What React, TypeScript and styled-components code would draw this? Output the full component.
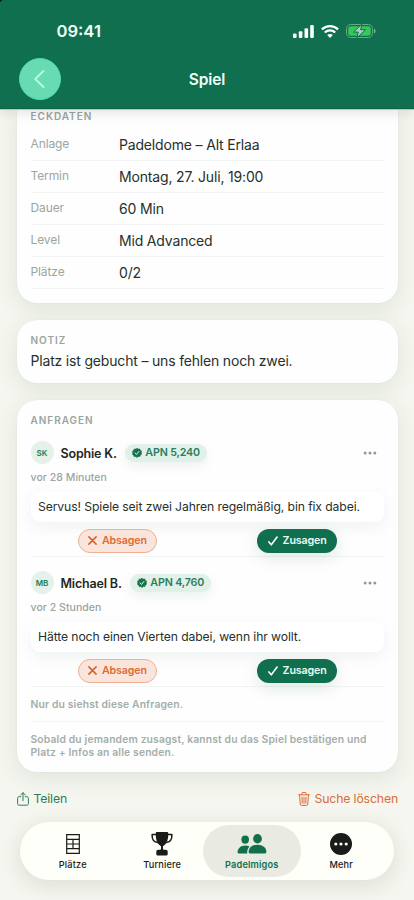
import React from "react";
import styled, { createGlobalStyle, css } from "styled-components";

const GlobalStyle = createGlobalStyle`
  * { box-sizing: border-box; }
  html, body { margin: 0; padding: 0; }
  body { font-family: Inter, "Liberation Sans", sans-serif; background: #f5f6ef; }
  svg { display: block; flex: none; }
  button { font: inherit; border: 0; background: none; padding: 0; margin: 0; color: inherit; }
`;

const Screen = styled.div`
  width: 414px;
  height: 900px;
  overflow: hidden;
  display: flex;
  flex-direction: column;
  background: #f5f6ef;
  color: #26302c;
`;

const Header = styled.header`
  position: relative;
  z-index: 2;
  flex: none;
  height: 109px;
  background: radial-gradient(circle at 0 0, #04150e 1px, #106f4e 2.5px);
  border-bottom: 1px solid #0b6444;
  box-shadow: 0 1px 0 #a9cfbd, 0 3px 12px rgba(0, 0, 0, 0.12);
  color: #f2fff9;
`;

const StatusBar = styled.div`
  height: 58px;
  padding: 4px 38px 0 56.5px;
  display: flex;
  align-items: center;
  justify-content: space-between;
`;

const Clock = styled.div`
  font-size: 16.6px;
  font-weight: 600;
  letter-spacing: 0;
`;

const StatusIcons = styled.div`
  display: flex;
  align-items: center;
  gap: 7px;
`;

const NavBar = styled.div`
  display: grid;
  grid-template-columns: 42px 1fr 42px;
  align-items: center;
  padding: 0 19px;
  height: 42px;
`;

const BackButton = styled.button`
  width: 42px;
  height: 42px;
  border-radius: 50%;
  border: 1px solid #4cdcb2;
  background: #68dbb3;
  display: grid;
  place-items: center;
`;

const Title = styled.h1`
  margin: 0;
  padding-top: 2px;
  text-align: center;
  font-size: 15.5px;
  line-height: 20px;
  font-weight: 600;
  letter-spacing: -0.1px;
`;

const Content = styled.main`
  flex: none;
  padding: 0 16px 0 16.5px;
  display: flex;
  flex-direction: column;
  gap: 17px;
`;

const Card = styled.section<{ $h: number; $cut?: boolean }>`
  height: ${(p) => p.$h}px;
  padding: ${(p) => (p.$cut ? "0" : "13px")} 14px 0;
  border-radius: ${(p) => (p.$cut ? "0 0 20px 20px" : "20px")};
  background: #fefefe;
  box-shadow: 0 6px 22px rgba(16, 85, 55, 0.1), 0 0 1px rgba(16, 70, 45, 0.12);
`;

const Label = styled.h2`
  margin: 0;
  font-size: 10px;
  line-height: 14px;
  font-weight: 600;
  letter-spacing: 0.98px;
  color: #9aa5a0;
`;

const FactList = styled.div`
  padding-top: 5.5px;
`;

const FactRow = styled.div`
  display: grid;
  grid-template-columns: 88.5px 1fr;
  align-items: center;
  height: 32px;
  padding-bottom: 2px;
  border-bottom: 1px solid #f2f4f3;
`;

const FactName = styled.span`
  font-size: 12px;
  letter-spacing: -0.1px;
  color: #9ba6a2;
`;

const FactValue = styled.span`
  padding-top: 2px;
  font-size: 14px;
  letter-spacing: -0.17px;
  white-space: nowrap;
`;

const Note = styled.p`
  margin: 4px 0 0;
  font-size: 14px;
  line-height: 20px;
  letter-spacing: -0.18px;
`;

const Request = styled.article`
  height: 130px;
  border-bottom: 1px solid #f2f4f3;
  display: flex;
  flex-direction: column;
`;

const Person = styled.div`
  display: flex;
  align-items: center;
  height: 24px;
  margin-top: 14px;
`;

const Avatar = styled.span`
  width: 23px;
  height: 23px;
  border-radius: 50%;
  background: #e4f2ea;
  color: #267c58;
  display: grid;
  place-items: center;
  font-size: 8px;
  font-weight: 600;
`;

const Name = styled.span`
  margin: 0 8px 0 7px;
  padding-top: 1px;
  font-size: 12.5px;
  font-weight: 600;
  letter-spacing: -0.17px;
  color: #1e2823;
  white-space: nowrap;
`;

const Badge = styled.span`
  height: 18px;
  padding: 0 7px;
  border-radius: 9px;
  display: flex;
  align-items: center;
  gap: 3.5px;
  background: #e1f1e9;
  box-shadow: 0 4px 12px rgba(16, 85, 55, 0.08);
  color: #2b7e5d;
  font-size: 10.7px;
  line-height: 18px;
  font-weight: 600;
  letter-spacing: -0.15px;
  white-space: nowrap;
`;

const More = styled.button`
  margin: 0 7.5px 0 auto;
`;

const Ago = styled.div`
  margin-top: 5px;
  font-size: 10.5px;
  line-height: 16px;
  font-weight: 500;
  letter-spacing: 0.05px;
  color: #9aa5a0;
`;

const Bubble = styled.p`
  margin: 6px 0 0;
  height: 30px;
  padding: 0 7.5px;
  border-radius: 9px;
  background: #fff;
  box-shadow: 0 5px 16px rgba(16, 85, 55, 0.065);
  font-size: 12.2px;
  line-height: 30px;
  letter-spacing: -0.11px;
  white-space: nowrap;
`;

const Actions = styled.div`
  display: grid;
  grid-template-columns: 1fr 1fr;
  column-gap: 6px;
  justify-items: center;
  margin-top: 7px;
`;

const Pill = styled.button<{ $kind: "decline" | "accept" }>`
  width: 79.5px;
  height: 24px;
  border-radius: 12px;
  display: flex;
  align-items: center;
  justify-content: center;
  gap: 5px;
  font-size: 10.7px;
  line-height: 22px;
  font-weight: 600;
  letter-spacing: -0.15px;
  ${(p) =>
    p.$kind === "decline"
      ? css`
          color: #df6b35;
          background: #fae5dc;
          border: 1px solid #f0ae92;
        `
      : css`
          color: #e9fbf3;
          background: #106f4e;
          box-shadow: 0 5px 16px rgba(16, 85, 55, 0.13);
        `}
`;

const Hint = styled.p<{ $line?: boolean }>`
  margin: 0;
  padding: ${(p) => (p.$line ? "11px 0 11px" : "11px 0 0")};
  border-bottom: ${(p) => (p.$line ? "1px solid #f4f6f5" : "0")};
  font-size: 10.3px;
  line-height: 12.5px;
  font-weight: 600;
  letter-spacing: 0.16px;
  color: #a3aea9;
  white-space: nowrap;
`;

const LinkRow = styled.div`
  display: flex;
  justify-content: space-between;
  align-items: center;
  height: 20px;
`;

const TextLink = styled.button<{ $color: string }>`
  display: flex;
  align-items: center;
  gap: 5px;
  font-size: 12.3px;
  line-height: 18px;
  letter-spacing: -0.17px;
  color: ${(p) => p.$color};
`;

const TabBar = styled.nav`
  flex: none;
  width: 374px;
  height: 58px;
  margin: 13px 0 0 20px;
  padding: 3px 8px;
  border-radius: 29px;
  background: #fefff8;
  box-shadow: 0 5px 22px rgba(30, 50, 35, 0.12);
  display: grid;
  grid-template-columns: repeat(4, 1fr);
`;

const Tab = styled.button<{ $active?: boolean }>`
  display: flex;
  flex-direction: column;
  align-items: center;
  margin: ${(p) => (p.$active ? "0 -4px" : "0")};
  border-radius: 26px;
  background: ${(p) => (p.$active ? "#e9ebe3" : "transparent")};
  color: ${(p) => (p.$active ? "#117049" : "#181b18")};
  font-size: 9.2px;
  line-height: 12px;
  font-weight: ${(p) => (p.$active ? 600 : 500)};
  letter-spacing: 0.17px;
`;

const TabIcon = styled.span`
  height: 34px;
  padding-top: 5px;
  display: grid;
  place-items: center;
`;

const Signal = () => (
  <svg width="21" height="13" viewBox="0 0 21 13" fill="#fff">
    <rect x="0" y="8.5" width="3.6" height="4.5" rx="1.1" />
    <rect x="5.8" y="6.2" width="3.6" height="6.8" rx="1.1" />
    <rect x="11.5" y="3.3" width="3.6" height="9.7" rx="1.1" />
    <rect x="17.2" y="0" width="3.6" height="13" rx="1.1" />
  </svg>
);

const Wifi = () => (
  <svg width="18" height="13" viewBox="0 0 18 13" fill="none" stroke="#fff" strokeWidth="2.3">
    <path d="M.9 4.4C5.4.1 12.6.1 17.1 4.4" />
    <path d="M3.8 7.5c2.9-2.8 7.5-2.8 10.4 0" />
    <path d="M6.2 10C7.8 8.5 10.2 8.5 11.8 10L9 12.9z" fill="#fff" stroke="none" />
  </svg>
);

const Battery = () => (
  <svg width="30" height="14" viewBox="0 0 30 14">
    <rect x=".5" y=".5" width="26" height="13" rx="4.2" fill="none" stroke="#68a68d" />
    <rect x="2.2" y="2.2" width="22.6" height="9.6" rx="2.7" fill="#35c759" />
    <path d="M28 4.7c2 .6 2 4 0 4.6z" fill="#82b6a1" />
    <path d="M15.9 0 7.6 8.1h4.7L10.9 14l8.6-8.300h-4.900z" fill="#a8cdbc" stroke="#106f4e" strokeWidth="1" strokeLinejoin="round" />
  </svg>
);

const Verified = () => (
  <svg width="10" height="10" viewBox="0 0 10 10">
    <path
      d="M5 .2 6.3 1 7.8.9l.6 1.4 1.3.9-.4 1.5.5 1.4-1.3.9L8 8.5l-1.6-.1L5 9.6l-1.3-1-1.6.1-.5-1.5-1.3-.9.5-1.5L.3 3.3l1.3-.9L2.2.9 3.7 1z"
      fill="#19734f"
      stroke="#19734f"
      strokeWidth=".5"
      strokeLinejoin="round"
    />
    <path d="m3.1 5 1.4 1.5 2.4-3" fill="none" stroke="#e1f1e9" strokeLinecap="round" />
  </svg>
);

const Dots = () => (
  <svg width="14" height="4" viewBox="0 0 14 4" fill="#919995">
    <circle cx="2.2" cy="2" r="1.5" />
    <circle cx="7" cy="2" r="1.5" />
    <circle cx="11.8" cy="2" r="1.5" />
  </svg>
);

const Cross = () => (
  <svg width="9" height="9" viewBox="0 0 9 9" stroke="#df5e25" strokeWidth="1.5" strokeLinecap="round">
    <path d="m.9.9 7.2 7.2M8.1.9.9 8.1" />
  </svg>
);

const Check = () => (
  <svg width="10" height="10" viewBox="0 0 10 10" fill="none" stroke="#fff" strokeWidth="1.6" strokeLinecap="round" strokeLinejoin="round">
    <path d="M.9 5.9 3.3 8.8 9.1 1.1" />
  </svg>
);

const ShareIcon = () => (
  <svg width="12" height="14" viewBox="0 0 12 14" fill="none" stroke="#287e5a" strokeWidth="1" strokeLinecap="round" strokeLinejoin="round">
    <path d="M3.8 4.7H2.2C1.2 4.7.6 5.3.6 6.3v5.2c0 1 .6 1.7 1.6 1.7h7.6c1 0 1.6-.7 1.6-1.7V6.3c0-1-.6-1.6-1.6-1.6H8.2M6 8.7V.8M3.7 3 6 .7 8.3 3" />
  </svg>
);

const TrashIcon = () => (
  <svg width="12" height="14" viewBox="0 0 12 14" fill="none" stroke="#dc6c37" strokeWidth="1" strokeLinecap="round" strokeLinejoin="round">
    <path d="M.6 2.8h10.8M3.8 2.6V1.3c0-.5.3-.8.8-.8h2.8c.5 0 .8.3.8.8v1.3M1.6 3l.6 9c.1.9.6 1.4 1.4 1.4h4.8c.8 0 1.3-.5 1.4-1.4l.6-9M4 5.2l.2 6M6 5.2v6M8 5.2l-.2 6" />
  </svg>
);

const CourtIcon = () => (
  <svg width="14" height="20" viewBox="0 0 14 20" fill="none" stroke="#181b18" strokeWidth="1.2">
    <path d="M.7.7h12.6v18.6H.7zM.7 5.3h12.6M.7 10h12.6M.7 14.7h12.6M7 5.3v9.4" />
  </svg>
);

const TrophyIcon = () => (
  <svg width="22" height="24" viewBox="0 0 22 24">
    <path d="M5.2 2.6H1.1c-.2 4.7 1.5 7.6 5.8 8M16.8 2.6h4.1c.2 4.7-1.5 7.6-5.8 8" fill="none" stroke="#181b18" strokeWidth="1.5" strokeLinejoin="round" />
    <path
      d="M6 0h10c.9 0 1.3.6 1.3 1.4-.1 5.7-1 9.9-4.7 12.3-.5.4-.6.8-.6 1.4v1.700c0 .6.3.9.9.9h1.700c1.300 0 2.100.8 2.100 2.100v2.300c0 .9-.5 1.500-1.400 1.500H6.700c-.9 0-1.400-.6-1.400-1.500v-2.300c0-1.300.8-2.100 2.100-2.100h1.700c.6 0 .9-.3.9-.9v-1.700c0-.6-.1-1-.6-1.400C5.700 11.300 4.800 7.100 4.700 1.400 4.700.6 5.100 0 6 0z"
      fill="#181b18"
    />
  </svg>
);

const PeopleIcon = () => (
  <svg width="30" height="20" viewBox="0 0 30 20" fill="#117049">
    <ellipse cx="8.2" cy="5.6" rx="3.8" ry="4.2" />
    <path d="M.6 18.3C.6 14.3 3.7 11.5 8.2 11.5c1.7 0 3.2.4 4.4 1.1-1.7 1.6-2.6 3.8-2.4 6.8H1.7c-.8 0-1.1-.4-1.1-1.1z" />
    <ellipse cx="20.5" cy="4.7" rx="4.4" ry="4.7" />
    <path d="M11.6 18c0-4.3 3.8-7.3 8.9-7.3s8.9 3 8.9 7.3c0 .9-.5 1.4-1.5 1.4H13.1c-1 0-1.5-.5-1.5-1.4z" />
  </svg>
);

const MoreIcon = () => (
  <svg width="22" height="22" viewBox="0 0 22 22">
    <circle cx="11" cy="11" r="11" fill="#181b18" />
    <circle cx="5.8" cy="11" r="1.6" fill="#fff" />
    <circle cx="11" cy="11" r="1.6" fill="#fff" />
    <circle cx="16.2" cy="11" r="1.6" fill="#fff" />
  </svg>
);

const facts = [
  ["Anlage", "Padeldome – Alt Erlaa"],
  ["Termin", "Montag, 27. Juli, 19:00"],
  ["Dauer", "60 Min"],
  ["Level", "Mid Advanced"],
  ["Plätze", "0/2"],
];

const requests = [
  { initials: "SK", name: "Sophie K.", rating: "APN 5,240", ago: "vor 28 Minuten", text: "Servus! Spiele seit zwei Jahren regelmäßig, bin fix dabei." },
  { initials: "MB", name: "Michael B.", rating: "APN 4,760", ago: "vor 2 Stunden", text: "Hätte noch einen Vierten dabei, wenn ihr wollt." },
];

const tabs = [
  { label: "Plätze", icon: <CourtIcon /> },
  { label: "Turniere", icon: <TrophyIcon /> },
  { label: "Padelmigos", icon: <PeopleIcon />, active: true },
  { label: "Mehr", icon: <MoreIcon /> },
];

export default function App() {
  return (
    <Screen>
      <GlobalStyle />
      <Header>
        <StatusBar>
          <Clock>09:41</Clock>
          <StatusIcons>
            <Signal />
            <Wifi />
            <Battery />
          </StatusIcons>
        </StatusBar>
        <NavBar>
          <BackButton aria-label="Zurück">
            <svg width="12" height="18" viewBox="0 0 12 18" fill="none" stroke="#b4ffe6" strokeWidth="1.8" strokeLinecap="round" strokeLinejoin="round">
              <path d="M9.5 1 1.2 9l8.3 8" />
            </svg>
          </BackButton>
          <Title>Spiel</Title>
        </NavBar>
      </Header>
      <Content>
        <Card $h={193.5} $cut>
          <Label>ECKDATEN</Label>
          <FactList>
            {facts.map(([name, value]) => (
              <FactRow key={name}>
                <FactName>{name}</FactName>
                <FactValue>{value}</FactValue>
              </FactRow>
            ))}
          </FactList>
        </Card>
        <Card $h={63}>
          <Label>NOTIZ</Label>
          <Note>Platz ist gebucht – uns fehlen noch zwei.</Note>
        </Card>
        <Card $h={372}>
          <Label>ANFRAGEN</Label>
          {requests.map((r) => (
            <Request key={r.initials}>
              <Person>
                <Avatar>{r.initials}</Avatar>
                <Name>{r.name}</Name>
                <Badge>
                  <Verified />
                  {r.rating}
                </Badge>
                <More aria-label="Optionen">
                  <Dots />
                </More>
              </Person>
              <Ago>{r.ago}</Ago>
              <Bubble>{r.text}</Bubble>
              <Actions>
                <Pill $kind="decline">
                  <Cross />
                  Absagen
                </Pill>
                <Pill $kind="accept">
                  <Check />
                  Zusagen
                </Pill>
              </Actions>
            </Request>
          ))}
          <Hint $line>Nur du siehst diese Anfragen.</Hint>
          <Hint>
            Sobald du jemandem zusagst, kannst du das Spiel bestätigen und
            <br />
            Platz + Infos an alle senden.
          </Hint>
        </Card>
        <LinkRow>
          <TextLink $color="#287e5a">
            <ShareIcon />
            Teilen
          </TextLink>
          <TextLink $color="#dc6c37">
            <TrashIcon />
            Suche löschen
          </TextLink>
        </LinkRow>
      </Content>
      <TabBar>
        {tabs.map((t) => (
          <Tab key={t.label} $active={t.active}>
            <TabIcon>{t.icon}</TabIcon>
            {t.label}
          </Tab>
        ))}
      </TabBar>
    </Screen>
  );
}
